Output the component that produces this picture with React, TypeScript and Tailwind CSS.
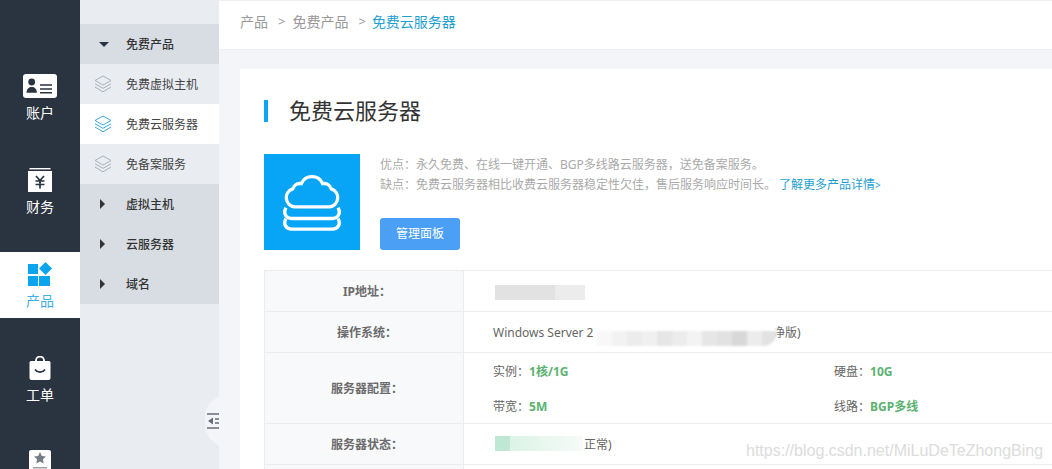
import type { ReactNode } from 'react';

const FONT = 'font-["Noto_Sans","Noto_Sans_CJK_SC",sans-serif]';

// smudged out part of the OS name
const MOSAIC = [
  'bg-[#f8f8f8]', 'bg-[#f2f2f2]', 'bg-[#ececec]', 'bg-[#f0f0f0]', 'bg-[#e6e6e6]', 'bg-[#ececec]',
  'bg-[#f3f3f3]', 'bg-[#e6e6e6]', 'bg-[#e2e2e2]', 'bg-[#d8d8d8]', 'bg-[#ececec]', 'bg-[#e2e2e2]',
];

function AccountIcon() {
  return (
    <svg width="34" height="24" viewBox="0 0 34 24">
      <rect width="34" height="24" rx="3" fill="#fff" />
      <circle cx="8.700" cy="8" r="3.400" fill="#2a3340" />
      <path d="M3.500 18.800c0-4 2.500-5.800 5.200-5.800s5.200 1.800 5.200 5.800z" fill="#2a3340" />
      <path d="M17 11h12M17 15h12M17 18.800h12" stroke="#2a3340" strokeWidth="1.500" />
    </svg>
  );
}

function FinanceIcon() {
  return (
    <svg width="24" height="24" viewBox="0 0 24 24">
      <rect x="1.500" y="0" width="21" height="1.400" fill="#fff" />
      <rect x="0" y="3" width="24" height="21" fill="#fff" />
      <path d="M8 8l4 4.500 4-4.500M7.500 13h9M7.500 16.500h9M12 12.500V20.500" stroke="#2a3340" strokeWidth="1.700" fill="none" />
    </svg>
  );
}

function ProductIcon() {
  return (
    <svg width="24" height="24" viewBox="0 0 24 24">
      <rect x="0" y="2" width="10" height="10" fill="#0ba5ee" />
      <rect x="0" y="14" width="10" height="10" fill="#0ba5ee" />
      <rect x="11" y="14" width="11" height="10" fill="#0ba5ee" />
      <path d="M17.500 0l6.500 6.500-6.500 6.500-6.500-6.500z" fill="#0ba5ee" />
    </svg>
  );
}

function TicketIcon() {
  return (
    <svg width="22" height="24" viewBox="0 0 22 24">
      <path d="M7 6V4.500a4 4 0 0 1 8 0V6" stroke="#fff" strokeWidth="1.800" fill="none" />
      <path d="M2 5h18a1.500 1.500 0 0 1 1.500 1.500V22a2 2 0 0 1-2 2h-17a2 2 0 0 1-2-2V6.500A1.500 1.500 0 0 1 2 5z" fill="#fff" />
      <path d="M6 13.500c2.500 3.500 7.500 3.500 10 0" stroke="#2a3340" strokeWidth="1.800" fill="none" />
    </svg>
  );
}

function StarIcon() {
  return (
    <svg width="22" height="24" viewBox="0 0 22 24">
      <rect width="22" height="24" rx="2" fill="#fff" />
      <path d="M11 2l1.800 3.900 4.200.5-3.100 2.900.8 4.200-3.700-2.100-3.700 2.100.8-4.200L5 6.400l4.200-.5z" fill="#757b84" />
      <rect x="4" y="17" width="14" height="1.500" fill="#9a9fa6" />
    </svg>
  );
}

function RailItem({ icon, label, active }: { icon: ReactNode; label?: string; active?: boolean }) {
  return (
    <div className={`h-[66px] shrink-0 flex flex-col items-center pt-[10px] ${active ? 'bg-white text-[#3fb0e2]' : 'text-white'}`}>
      <div className="h-6 flex items-center justify-center">{icon}</div>
      {label && <div className="text-[14px] leading-[20px] mt-[5px]">{label}</div>}
    </div>
  );
}

function LayersIcon({ color }: { color: string }) {
  return (
    <svg width="18" height="18" viewBox="0 0 18 18" fill="none" stroke={color} strokeWidth="1" strokeLinejoin="round">
      <path d="M9 1l8 4.500-8 4.500-8-4.500z" />
      <path d="M1 8.800l8 4.500 8-4.500" />
      <path d="M1 12l8 4.800 8-4.800" />
    </svg>
  );
}

function SectionRow({ label, open }: { label: string; open?: boolean }) {
  return (
    <div className="h-10 flex items-center bg-[#d8dde4] text-[12px] font-medium text-[#333]">
      <div className="w-[46px] flex justify-center pl-[2px]">
        {open ? (
          <div className="w-0 h-0 border-x-[5px] border-x-transparent border-t-[5px] border-t-[#2a3340]" />
        ) : (
          <div className="w-0 h-0 border-y-[5px] border-y-transparent border-l-[5px] border-l-[#333] mr-[3px]" />
        )}
      </div>
      <span className="mt-[2px]">{label}</span>
    </div>
  );
}

function SubRow({ label, active }: { label: string; active?: boolean }) {
  return (
    <div className={`h-10 flex items-center text-[12px] text-[#444] ${active ? 'bg-white' : 'bg-[#e9ecf1]'}`}>
      <div className="w-[46px] flex justify-center">
        <LayersIcon color={active ? '#3fa9dc' : '#a9b0bb'} />
      </div>
      <span className="mt-[2px]">{label}</span>
    </div>
  );
}

function Row({ label, h, children }: { label: string; h: string; children?: ReactNode }) {
  return (
    <div className={`flex border-b border-[#eaecef] ${h}`}>
      <div className="w-[199px] shrink-0 bg-[#f8f9fb] border-r border-[#eaecef] flex items-center justify-center pl-[6px] pt-[2px] text-[12px] font-bold text-[#6b6b6b]">
        {label}
      </div>
      <div className="flex-1 relative text-[12px] text-[#666] flex items-center pl-[29px] pt-[2px]">{children}</div>
    </div>
  );
}

function Spec({ name, value }: { name: string; value: string }) {
  return (
    <span>
      {name}：<span className="font-bold text-[#5cb270]">{value}</span>
    </span>
  );
}

export default function App() {
  return (
    <div className={`w-[1052px] h-[469px] overflow-hidden flex bg-[#f4f5f9] ${FONT}`}>
      {/* main rail */}
      <div className="w-20 shrink-0 bg-[#2a3340] flex flex-col gap-7 pt-16">
        <RailItem icon={<AccountIcon />} label="账户" />
        <RailItem icon={<FinanceIcon />} label="财务" />
        <RailItem icon={<ProductIcon />} label="产品" active />
        <RailItem icon={<TicketIcon />} label="工单" />
        <RailItem icon={<StarIcon />} />
      </div>

      {/* secondary menu */}
      <div className="w-[139px] shrink-0 bg-[#e9ecf1] pt-6 relative">
        <SectionRow label="免费产品" open />
        <SubRow label="免费虚拟主机" />
        <SubRow label="免费云服务器" active />
        <SubRow label="免备案服务" />
        <SectionRow label="虚拟主机" />
        <SectionRow label="云服务器" />
        <SectionRow label="域名" />
        <div className="absolute right-0 top-[396px] w-[14px] h-[50px] bg-[#f4f5f9] [clip-path:polygon(100%_0,35%_14%,0_32%,0_68%,35%_86%,100%_100%)] flex items-center justify-end">
          <svg width="12" height="16" viewBox="0 0 12 16">
            <path d="M0 1h12M0 15h12M8 6h4M8 10h4" stroke="#666c78" strokeWidth="1.700" />
            <path d="M6 4.500v7L1 8z" fill="#666c78" />
          </svg>
        </div>
      </div>

      {/* content */}
      <div className="flex-1 min-w-0">
        <div className="h-[50px] bg-white border-t border-[#f0f1f3] border-b border-b-[#eceef2] flex items-center pl-[21px] text-[14px] text-[#999] pb-[7px]">
          <span>产品</span>
          <span className="ml-[10px] mr-[7px] text-[13px]">&gt;</span>
          <span>免费产品</span>
          <span className="ml-[10px] mr-[6px] text-[13px]">&gt;</span>
          <span className="text-[#1f9fd0]">免费云服务器</span>
        </div>

        <div className="mt-[19px] ml-[21px] bg-white pl-6 pt-[31px] h-[420px]">
          <div className="flex items-center h-[22px] border-l-4 border-[#0ba5f5] pl-[21px] pb-[2px] text-[22px] text-[#333]">
            免费云服务器
          </div>

          <div className="flex mt-[32px]">
            <div className="w-24 h-24 shrink-0 bg-[#08a5f7] flex items-center justify-center">
              <svg width="58" height="60" viewBox="0 0 60 60" fill="none" stroke="#fff" strokeWidth="3.500">
                <path d="M12 35H48A9.500 9.500 0 0 0 50 16.500A8 8 0 0 0 41 11A12 12 0 0 0 19 11A8 8 0 0 0 10 16.500A9.500 9.500 0 0 0 12 35Z" />
                <path d="M3 36C0 42 3 47 9 47H51C57 47 60 42 57 36" />
                <path d="M3 47C0 53 3 58 9 58H51C57 58 60 53 57 47" />
              </svg>
            </div>
            <div className="ml-5 flex flex-col">
              <div className="text-[12px] leading-[20px] text-[#aaa] mt-[1px]">
                <div>优点：永久免费、在线一键开通、BGP多线路云服务器，送免备案服务。</div>
                <div>
                  缺点：免费云服务器相比收费云服务器稳定性欠佳，售后服务响应时间长。
                  <span className="ml-[3px] text-[#1f9fd0]">
                    了解更多产品详情<span className="text-[10px]">&gt;</span>
                  </span>
                </div>
              </div>
              <button className="mt-[23px] w-20 h-8 rounded-[3px] bg-[#4ba0f5] text-white text-[12px]">管理面板</button>
            </div>
          </div>

          <div className="mt-5 border-t border-l border-[#eaecef]">
            <Row label="IP地址：" h="h-[41px]">
              <div className="absolute left-[31px] top-[14px] w-[90px] h-[15px] flex">
                <div className="w-[60px] bg-[#e2e2e2]" />
                <div className="flex-1 bg-[#ececec]" />
              </div>
            </Row>
            <Row label="操作系统：" h="h-[41px]">
              <span>Windows Server 2</span>
              <span className="absolute left-[309px]">净版)</span>
              <div className="absolute left-[133px] top-[6px] w-[180px] h-[28px] rounded-r-full overflow-hidden flex items-end bg-white blur-[1px]">
                {MOSAIC.map((c, i) => (
                  <div key={i} className={`w-[15px] h-[15px] ${c}`} />
                ))}
              </div>
            </Row>
            <Row label="服务器配置：" h="h-[71px]">
              <div className="grid grid-cols-[341px_1fr] gap-y-[17px] w-full">
                <Spec name="实例" value="1核/1G" />
                <Spec name="硬盘" value="10G" />
                <Spec name="带宽" value="5M" />
                <Spec name="线路" value="BGP多线" />
              </div>
            </Row>
            <Row label="服务器状态：" h="h-[41px]">
              <span className="ml-[91px]">正常)</span>
              <div className="absolute left-[31px] top-[12px] w-[88px] h-[15px] flex">
                <div className="w-[15px] bg-[#bfe8d4]" />
                <div className="flex-1 bg-linear-to-r from-[#dcf3e7] to-[#f6fbf8]" />
              </div>
            </Row>
            <Row label="" h="h-[41px]" />
          </div>
        </div>
      </div>

      {/* watermark */}
      <div className="absolute left-[746px] top-[441px] text-[16px] leading-[20px] text-[#dcdcdc] font-['Liberation_Sans',sans-serif]">
        https://blog.csdn.net/MiLuDeTeZhongBing
      </div>
    </div>
  );
}
